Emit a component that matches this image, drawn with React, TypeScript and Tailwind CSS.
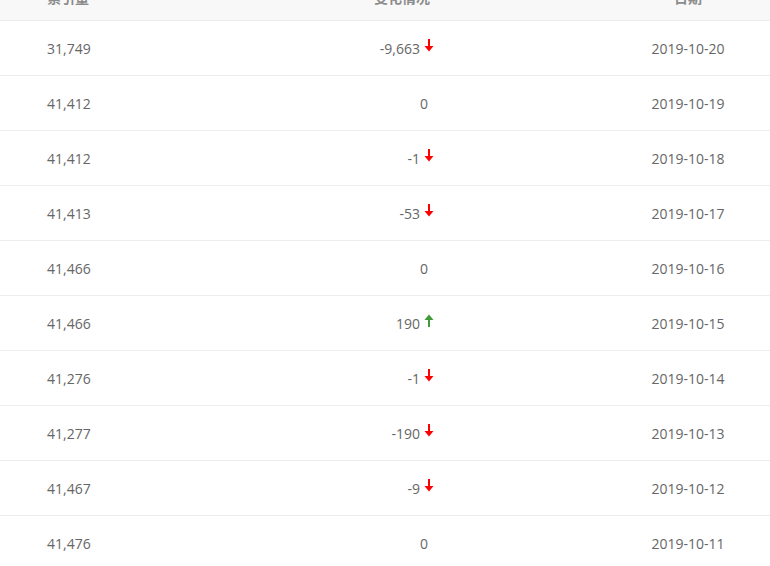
import React from "react";

type Row = { count: string; change: string; dir: "up" | "down" | null; date: string };

const rows: Row[] = [
  { count: "31,749", change: "-9,663", dir: "down", date: "2019-10-20" },
  { count: "41,412", change: "0", dir: null, date: "2019-10-19" },
  { count: "41,412", change: "-1", dir: "down", date: "2019-10-18" },
  { count: "41,413", change: "-53", dir: "down", date: "2019-10-17" },
  { count: "41,466", change: "0", dir: null, date: "2019-10-16" },
  { count: "41,466", change: "190", dir: "up", date: "2019-10-15" },
  { count: "41,276", change: "-1", dir: "down", date: "2019-10-14" },
  { count: "41,277", change: "-190", dir: "down", date: "2019-10-13" },
  { count: "41,467", change: "-9", dir: "down", date: "2019-10-12" },
  { count: "41,476", change: "0", dir: null, date: "2019-10-11" },
];

function Arrow({ dir }: { dir: "up" | "down" }) {
  if (dir === "down") {
    return (
      <svg width="10" height="13" viewBox="0 0 10 13" className="ml-[4px] -translate-y-[3px]">
        <rect x="4" y="0" width="2" height="8" fill="#ff0000" />
        <polygon points="0.5,7 9.5,7 5,12.5" fill="#ff0000" />
      </svg>
    );
  }
  return (
    <svg width="10" height="13" viewBox="0 0 10 13" className="ml-[4px] -translate-y-[3px]">
      <rect x="4" y="5" width="2" height="8" fill="#3f9a37" />
      <polygon points="0.5,6 9.5,6 5,0.5" fill="#3f9a37" />
    </svg>
  );
}

export default function App() {
  return (
    <div
      className="w-[770px] h-[566px] overflow-hidden bg-white text-[14px] text-[#666]"
      style={{ fontFamily: '"Open Sans", "Noto Sans CJK SC", sans-serif' }}
    >
      <div className="h-[21px] overflow-hidden bg-[#f8f8f8] border-b border-[#ededed]">
        <div className="grid grid-cols-[300px_134px_172px_164px] mt-[-12px] leading-[20px] font-bold text-[#8c8c8c]">
          <div className="pl-[47px]">索引量</div>
          <div className="text-right pr-[4px]">变化情况</div>
          <div />
          <div className="text-center">日期</div>
        </div>
      </div>
      {rows.map((r, i) => (
        <div
          key={i}
          className="grid grid-cols-[300px_134px_172px_164px] h-[55px] items-center border-b border-[#ededed]"
        >
          <div className="pl-[47px]">{r.count}</div>
          <div className={"flex items-center justify-end " + (r.dir ? "" : "pr-[6px]")}>
            <span>{r.change}</span>
            {r.dir && <Arrow dir={r.dir} />}
          </div>
          <div />
          <div className="text-center">{r.date}</div>
        </div>
      ))}
    </div>
  );
}
